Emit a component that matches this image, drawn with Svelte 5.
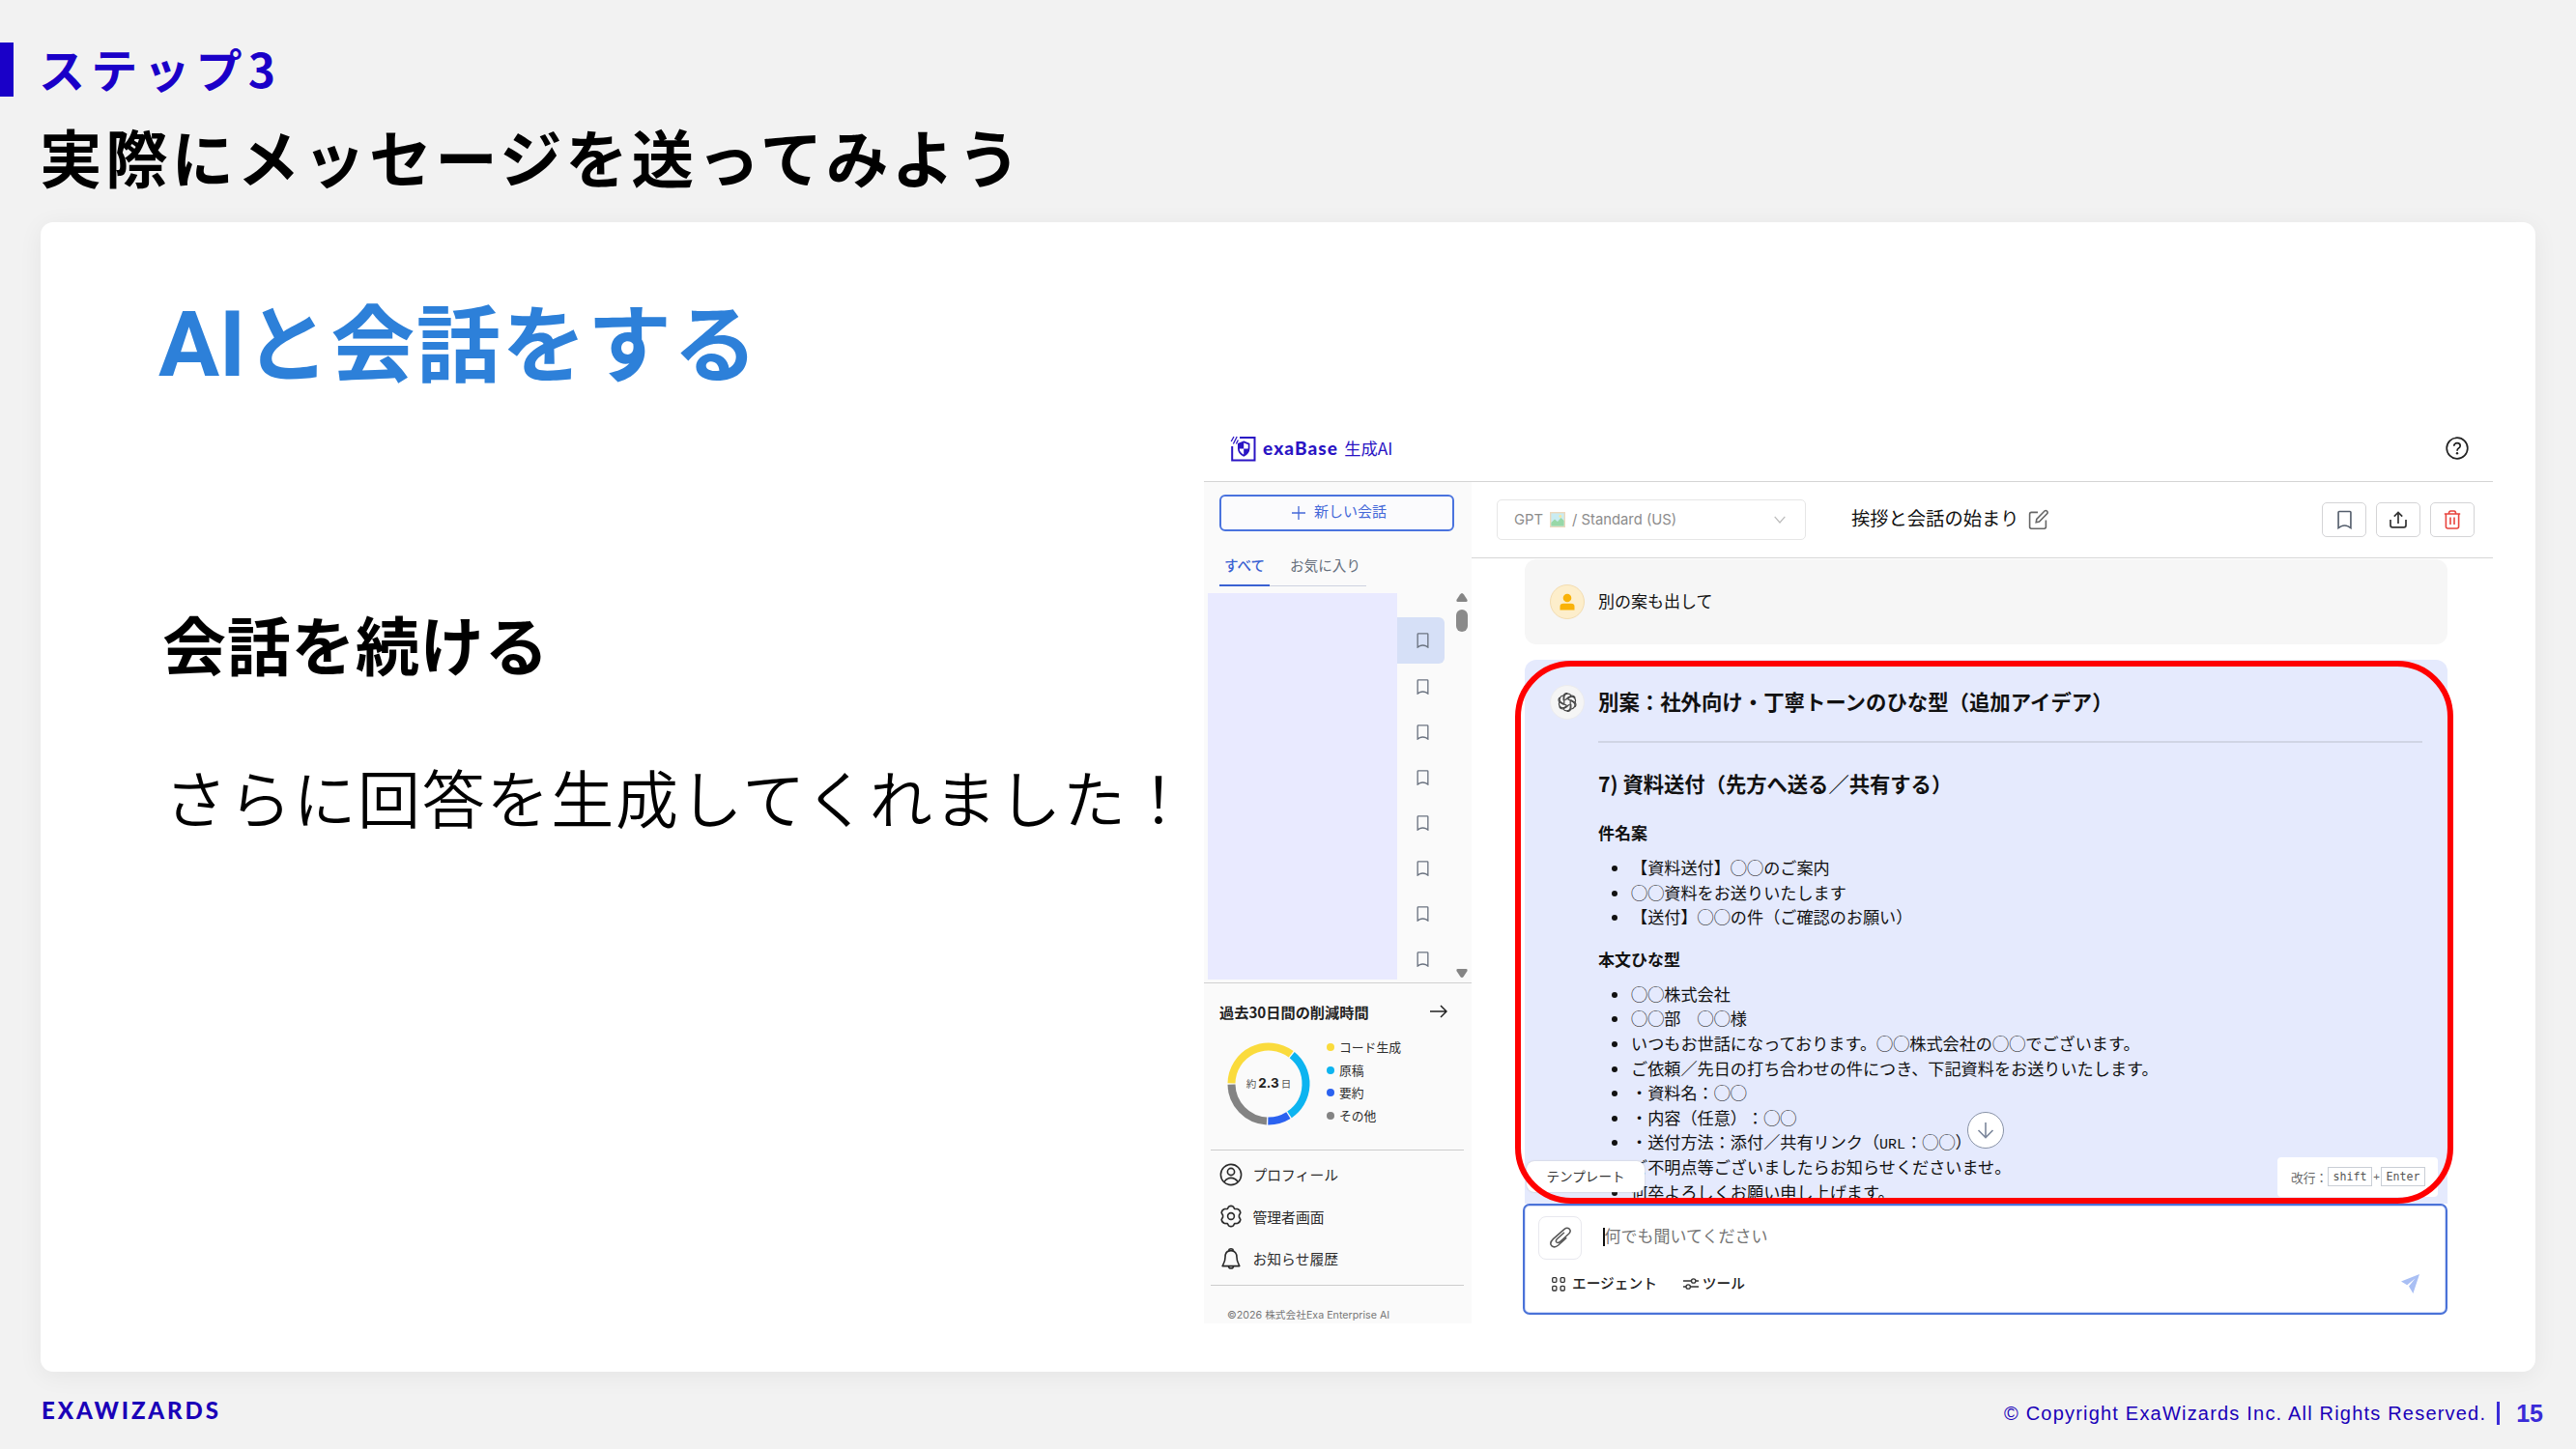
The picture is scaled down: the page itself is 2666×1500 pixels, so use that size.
<script>
  const legend = [
    { label: 'コード生成', color: '#fadb3c' },
    { label: '原稿', color: '#0db4f0' },
    { label: '要約', color: '#2b62f0' },
    { label: 'その他', color: '#838383' }
  ];

  // from / to in degrees, clockwise from the top
  const segments = [
    { from: -89, to: 37, color: '#fadb3c' },
    { from: 39, to: 146, color: '#0db4f0' },
    { from: 148, to: 181, color: '#2b62f0' },
    { from: 183, to: 269, color: '#838383' }
  ];

  const subjects = ['【資料送付】◯◯のご案内', '◯◯資料をお送りいたします', '【送付】◯◯の件（ご確認のお願い）'];
  const bodyTop = [
    '◯◯株式会社',
    '◯◯部　◯◯様',
    'いつもお世話になっております。◯◯株式会社の◯◯でございます。',
    'ご依頼／先日の打ち合わせの件につき、下記資料をお送りいたします。',
    '・資料名：◯◯',
    '・内容（任意）：◯◯'
  ];
  const bodyEnd = ['ご不明点等ございましたらお知らせくださいませ。', '何卒よろしくお願い申し上げます。'];

  let rows = Array(8).fill(0);

  function arc({ from, to }) {
    const p = (deg) => {
      const a = (deg * Math.PI) / 180;
      return `${(43 + 38.5 * Math.sin(a)).toFixed(2)} ${(43 - 38.5 * Math.cos(a)).toFixed(2)}`;
    };
    return `M${p(from)}A38.5 38.5 0 0 1 ${p(to)}`;
  }
</script>

{#snippet bookmark(w, h)}
  <svg width={w} height={h} viewBox="0 0 14 18" fill="none" stroke="currentColor" stroke-width="1.5">
    <path d="M1 1.8Q1 1 1.8 1H12.2Q13 1 13 1.8V17L10.5 15.4Q7 13.8 3.5 15.4L1 17Z" />
  </svg>
{/snippet}

<div class="slide">
  <header>
    <div class="step">ステップ3</div>
    <h1>実際にメッセージを送ってみよう</h1>
  </header>

  <main class="card">
    <section class="copy">
      <h2><span>AI</span>と会話をする</h2>
      <h3>会話を続ける</h3>
      <p>さらに回答を生成してくれました！</p>
    </section>

    <section class="app">
      <div class="topbar">
        <svg class="mark" width="28" height="30" viewBox="0 0 28 30" fill="none" stroke="#2a14c4">
          <path d="M10 4H25.5V27.5H2.2V13" stroke-width="2" />
          <path d="M1.2 8L4 3M3.4 10.5L7.2 3M6.4 10.5L8.4 6.5" stroke-width="1.3" />
          <path d="M14.2 8.4L19.6 10.6V15.4Q19.4 20 14.2 22.8Q9 20 8.8 15.4V10.6Z" stroke-width="1.7" />
          <path d="M14.2 8.4L8.8 10.6V15.4H14.2ZM14.2 15.4V22.8Q19.4 20 19.6 15.4Z" fill="#2a14c4" stroke="none" />
        </svg>
        <b>exaBase</b>
        <span>生成AI</span>
        <svg class="help" width="24" height="24" viewBox="0 0 24 24" fill="none" stroke="#222" stroke-width="1.7">
          <circle cx="12" cy="12" r="10.8" />
          <path d="M8.7 9.8Q8.9 6.7 12 6.7Q15.2 6.7 15.2 9.5Q15.2 11 13.5 12Q12 12.9 12 14.7" />
          <circle cx="12" cy="17.3" r="1.2" fill="#222" stroke="none" />
        </svg>
      </div>

      <aside>
        <button class="new">
          <svg width="14" height="14" viewBox="0 0 14 14" stroke="currentColor" stroke-width="1.3"><path d="M7 0V14M0 7H14" /></svg>
          <span>新しい会話</span>
        </button>
        <nav class="tabs">
          <span class="active">すべて</span>
          <span>お気に入り</span>
        </nav>
        <div class="history">
          <div class="mask"></div>
          <div class="marks">
            {#each rows as _, i}
              <div class="row" class:selected={i === 0}>{@render bookmark(13, 16)}</div>
            {/each}
          </div>
          <div class="scroll">
            <svg width="12" height="9" viewBox="0 0 12 9"><path d="M6 0Q7 0 8 1.5L11.6 7Q12 9 10.5 9H1.5Q0 9 .4 7L4 1.5Q5 0 6 0Z" fill="#858585" /></svg>
            <div class="thumb"></div>
            <svg class="down" width="12" height="9" viewBox="0 0 12 9"><path d="M6 9Q7 9 8 7.5L11.6 2Q12 0 10.5 0H1.5Q0 0 .4 2L4 7.5Q5 9 6 9Z" fill="#858585" /></svg>
          </div>
        </div>

        <div class="usage">
          <div class="usage-head">
            <span>過去30日間の削減時間</span>
            <svg width="18" height="14" viewBox="0 0 18 14" fill="none" stroke="#222" stroke-width="1.5"><path d="M0 7H17M11 1L17 7L11 13" /></svg>
          </div>
          <div class="usage-body">
            <div class="donut">
              <svg width="86" height="86" viewBox="0 0 86 86" fill="none" stroke-width="8">
                {#each segments as s}
                  <path d={arc(s)} stroke={s.color} />
                {/each}
              </svg>
              <div class="value">約<b>2.3</b>日</div>
            </div>
            <ul>
              {#each legend as item}
                <li><i style="background: {item.color}"></i>{item.label}</li>
              {/each}
            </ul>
          </div>
        </div>

        <div class="menu">
          <div>
            <svg width="24" height="24" viewBox="0 0 24 24" fill="none" stroke="#2a2a2a" stroke-width="1.6">
              <circle cx="12" cy="12" r="10.6" /><circle cx="12" cy="9" r="3.6" /><path d="M4.8 19.6Q7.5 15.4 12 15.4T19.2 19.6" />
            </svg>
            プロフィール
          </div>
          <div>
            <svg width="24" height="24" viewBox="0 0 24 24" fill="none" stroke="#2a2a2a" stroke-width="1.6" stroke-linejoin="round">
              <path d="M9.6 2.2Q12 .6 14.4 2.2L15.6 4.4L18.6 4.5Q21.6 5.6 21.8 8.6L20.4 11L20.4 13L21.8 15.4Q21.6 18.4 18.6 19.5L15.6 19.6L14.4 21.8Q12 23.4 9.6 21.8L8.4 19.6L5.4 19.5Q2.4 18.4 2.2 15.4L3.6 13L3.6 11L2.2 8.6Q2.4 5.6 5.4 4.5L8.4 4.4Z" />
              <circle cx="12" cy="12" r="3.4" />
            </svg>
            管理者画面
          </div>
          <div>
            <svg width="24" height="24" viewBox="0 0 24 24" fill="none" stroke="#2a2a2a" stroke-width="1.6" stroke-linejoin="round">
              <path d="M12 3.6C7.8 3.6 6 6.8 6 10.4C6 14.8 4.6 16 3.2 19.6H20.8C19.4 16 18 14.8 18 10.4C18 6.8 16.2 3.6 12 3.6Z" />
              <path d="M10 3.8V2.4Q12 1.2 14 2.4V3.8M9.5 19.8Q9.8 22 12 22T14.5 19.8" />
            </svg>
            お知らせ履歴
          </div>
        </div>
        <small>©2026 株式会社Exa Enterprise AI</small>
      </aside>

      <div class="main">
        <div class="toolbar">
          <div class="select">
            <span>GPT</span>
            <svg width="16" height="16" viewBox="0 0 16 16">
              <rect x=".7" y=".7" width="14.6" height="14.6" fill="#c9ecf2" stroke="#ecd9bd" stroke-width="1.4" />
              <path d="M1.4 11L5 7.5L8 10L11.5 6L14.6 9V14.6H1.4Z" fill="#98d8a8" /><circle cx="10.8" cy="4.5" r="1.4" fill="#f8e7a0" />
            </svg>
            <span>/ Standard (US)</span>
            <svg class="chev" width="12" height="8" viewBox="0 0 12 8" fill="none" stroke="#bbb" stroke-width="1.2"><path d="M.7 .8L6 7L11.3 .8" /></svg>
          </div>
          <span class="title">挨拶と会話の始まり</span>
          <svg width="22" height="22" viewBox="0 0 22 22" fill="none" stroke="#666" stroke-width="1.6">
            <path d="M10 3.4H3.4Q1.6 3.4 1.6 5.2V18.6Q1.6 20.2 3.4 20.2H16.6Q18.4 20.2 18.4 18.6V11.5" />
            <path d="M8.2 13.8L8.8 10.4L17.2 1.8Q18.4 1 19.6 2.2Q20.6 3.4 19.8 4.6L11.5 13Z" />
          </svg>
          <div class="tools">
            <button class="bm">{@render bookmark(15, 20)}</button>
            <button>
              <svg width="18" height="18" viewBox="0 0 18 18" fill="none" stroke="#333" stroke-width="1.7"><path d="M1 9V14.8Q1 16.8 3 16.8H15Q17 16.8 17 14.8V9M9 13V1.6M4.8 5.6L9 1.4L13.2 5.6" /></svg>
            </button>
            <button>
              <svg width="18" height="20" viewBox="0 0 18 20" fill="none" stroke="#e8443e" stroke-width="1.6"><path d="M.8 4H17.2M5.4 4Q5.4 1 7.4 1H10.6Q12.6 1 12.6 4M2.4 4V17Q2.4 19 4.4 19H13.6Q15.6 19 15.6 17V4M7 7.5V15M11 7.5V15" /></svg>
            </button>
          </div>
        </div>

        <div class="chat">
          <div class="msg user">
            <div class="avatar me">
              <svg width="16" height="18" viewBox="0 0 16 18" fill="#f9b208"><circle cx="8" cy="5" r="4.3" /><path d="M.5 17.5V14Q.5 10.8 4 10.8H12Q15.5 10.8 15.5 14V17.5Z" /></svg>
            </div>
            <p>別の案も出して</p>
          </div>

          <div class="msg ai">
            <div class="avatar">
              <svg width="20" height="20" viewBox="-10 -10 20 20" fill="none" stroke="#444" stroke-width="1.2" stroke-linejoin="round">
                {#each [0, 60, 120, 180, 240, 300] as r}
                  <path transform="rotate({r})" d="M-3.2 1.2V-5.2Q-3 -8.8 .6 -8.8Q2.6 -8.8 3.8 -7.4M-.4 -4.2L4.4 -7Q7.4 -7 8.2 -4.4" />
                {/each}
              </svg>
            </div>
            <div class="body">
              <h4>別案：社外向け・丁寧トーンのひな型（追加アイデア）</h4>
              <hr />
              <h5>7) 資料送付（先方へ送る／共有する）</h5>
              <h6>件名案</h6>
              <ul>
                {#each subjects as line}
                  <li>{line}</li>
                {/each}
              </ul>
              <h6 class="second">本文ひな型</h6>
              <ul>
                {#each bodyTop as line}
                  <li>{line}</li>
                {/each}
                <li>・送付方法：添付／共有リンク（<code>URL</code>：◯◯）</li>
                {#each bodyEnd as line}
                  <li>{line}</li>
                {/each}
              </ul>
            </div>
          </div>

          <div class="chip">テンプレート</div>
          <div class="hint">改行：<kbd>shift</kbd><em>+</em><kbd>Enter</kbd></div>
          <div class="to-end">
            <svg width="18" height="18" viewBox="0 0 18 18" fill="none" stroke="#7c879b" stroke-width="1.6"><path d="M9 1V16.5M1.5 9L9 16.5L16.5 9" /></svg>
          </div>
        </div>

        <div class="composer">
          <div class="line">
            <div class="clip">
              <svg width="24" height="22" viewBox="0 0 24 22" fill="none" stroke="#555" stroke-width="1.5" stroke-linecap="round">
                <path d="M15.5 6.3L8.3 12.8Q6.6 14.6 8 16Q9.4 17.2 11.2 15.7L20.6 7.3Q23.4 4.4 21.2 2.2Q18.8 .2 15.8 2.6L4.4 12.6Q.2 16.6 2.8 19.6Q5.8 22.4 9.8 19L17.8 11.8" />
              </svg>
            </div>
            <div class="caret"></div>
            <span>何でも聞いてください</span>
          </div>
          <div class="actions">
            <svg width="14" height="15" viewBox="0 0 14 15" fill="none" stroke="#333" stroke-width="1.3">
              <rect x=".7" y=".7" width="4.2" height="4.6" rx="1" /><rect x="9.1" y=".7" width="4.2" height="4.6" rx="1" />
              <rect x=".7" y="9.4" width="4.2" height="4.6" rx="1" /><rect x="9.1" y="9.4" width="4.2" height="4.6" rx="1" />
            </svg>
            <span>エージェント</span>
            <svg class="tune" width="16" height="14" viewBox="0 0 16 14" fill="none" stroke="#333" stroke-width="1.3">
              <path d="M0 4H8.5M13 4H16M0 10H3M7.5 10H16" /><circle cx="10.7" cy="4" r="2.2" /><circle cx="5.2" cy="10" r="2.2" />
            </svg>
            <span class="tool">ツール</span>
            <svg class="send" width="19" height="20" viewBox="0 0 19 20" fill="#a9bff4"><path d="M19 0L0 7.5L6.2 11.3L14.5 4.6L8 12.6L12.4 20Z" /></svg>
          </div>
        </div>

        <div class="frame"></div>
      </div>
    </section>
  </main>

  <footer>
    <span class="brand">EXAWIZARDS</span>
    <span class="legal">© Copyright ExaWizards Inc. All Rights Reserved.</span>
    <span class="bar"></span>
    <b>15</b>
  </footer>
</div>

<style>
  :global(body) {
    margin: 0;
    background: #f2f2f2;
  }

  .slide {
    width: 2666px;
    height: 1500px;
    display: flex;
    flex-direction: column;
    overflow: hidden;
    background: #f2f2f2;
    color: #111;
    font-family: "Noto Sans CJK JP", sans-serif;
    text-spacing-trim: space-all;
  }

  .slide * {
    box-sizing: border-box;
  }

  h1, h2, h3, h4, h5, h6, p, ul {
    margin: 0;
    padding: 0;
    white-space: nowrap;
  }

  svg {
    display: block;
    flex: none;
  }

  header {
    height: 230px;
    padding-top: 44px;
  }

  .step {
    height: 56px;
    border-left: 14px solid #1a00c8;
    padding-left: 26px;
    color: #1a00c8;
    font-size: 48px;
    font-weight: 700;
    line-height: 52px;
    letter-spacing: 6.2px;
  }

  h1 {
    margin: 17px 0 0 41px;
    font-size: 64.5px;
    font-weight: 700;
    line-height: 88px;
    letter-spacing: 3.7px;
    color: #000;
  }

  .card {
    height: 1190px;
    margin: 0 42px;
    display: flex;
    border-radius: 13px;
    background: #fff;
    box-shadow: 0 4px 26px rgba(0, 0, 0, 0.06);
  }

  .copy {
    width: 1204px;
    padding-left: 122px;
  }

  h2 {
    height: 120px;
    margin-top: 61px;
    line-height: 120px;
    font-size: 87px;
    font-weight: 700;
    letter-spacing: 1.6px;
    color: #2d80d9;
  }

  h2 span {
    font: 700 94px/1 Roboto, sans-serif;
    letter-spacing: -0.5px;
  }

  h3 {
    margin: 204px 0 0 4px;
    line-height: 100px;
    font-size: 66px;
    font-weight: 700;
    letter-spacing: 0.7px;
    color: #000;
  }

  .copy p {
    margin: 59px 0 0 6px;
    line-height: 100px;
    font-size: 65px;
    font-weight: 350;
    letter-spacing: 1.7px;
    color: #000;
  }

  .app {
    width: 1334px;
    height: 940px;
    margin-top: 200px;
    display: grid;
    grid-template: 69px 871px / 277px 1057px;
  }

  .topbar {
    grid-column: 1 / 3;
    display: flex;
    align-items: center;
    padding: 0 25px 1px 27px;
    border-bottom: 1.5px solid #d4d4d4;
    color: #2a14c4;
  }

  .topbar b {
    margin-left: 6px;
    font: 900 19px/24px Lato, sans-serif;
    letter-spacing: 1.1px;
  }

  .topbar span {
    margin-left: 6px;
    font-size: 17.3px;
    line-height: 24px;
    font-weight: 400;
  }

  .help {
    margin-left: auto;
  }

  button {
    display: flex;
    align-items: center;
    justify-content: center;
    padding: 0;
    background: #fff;
    font-family: inherit;
  }

  aside {
    background: #fafafa;
    color: #2c2c2c;
  }

  .new {
    width: 243px;
    height: 38px;
    margin: 13px 0 0 16px;
    padding-left: 5px;
    gap: 9px;
    border: 2px solid #4a73de;
    border-radius: 6px;
    background: #fbfbfd;
    color: #4468d8;
    font-size: 15px;
  }

  .new span {
    padding-bottom: 5px;
  }

  .tabs {
    display: flex;
    width: 152px;
    height: 38px;
    margin: 19px 0 0 16px;
    border-bottom: 1.5px solid #cdd2e0;
    font-size: 14.6px;
    line-height: 32px;
    color: #666f7c;
  }

  .tabs span {
    padding-left: 21px;
    white-space: nowrap;
  }

  .tabs .active {
    width: 52px;
    height: 38px;
    padding-left: 5px;
    border-bottom: 2px solid #3a62d2;
    color: #3a62d2;
    font-weight: 500;
  }

  .history {
    display: flex;
    height: 411px;
    padding: 7px 0 4px 4px;
    border-bottom: 1.5px solid #d0d0d0;
  }

  .mask {
    width: 196px;
    height: 400px;
    background: #e9eaff;
  }

  .marks {
    width: 49px;
    padding-top: 25px;
    color: #6b7380;
  }

  .row {
    height: 47px;
    display: flex;
    align-items: center;
    padding-left: 20px;
  }

  .row.selected {
    height: 48px;
    border-radius: 0 6px 6px 0;
    background: #d6e0f7;
  }

  .scroll {
    display: flex;
    flex-direction: column;
    margin-left: 11.5px;
  }

  .thumb {
    width: 12px;
    height: 23px;
    margin-top: 8px;
    border-radius: 6px;
    background: #8a8a8a;
  }

  .down {
    margin-top: auto;
    margin-bottom: 1px;
  }

  .usage {
    height: 173px;
    margin: 0 8px 0 7px;
    padding: 16px 17px 0 9px;
    border-bottom: 1.5px solid #ccc;
  }

  .usage-head {
    display: flex;
    align-items: center;
    justify-content: space-between;
    height: 26px;
    font-size: 15.2px;
    font-weight: 700;
    color: #222;
  }

  .usage-body {
    display: flex;
    align-items: flex-start;
    padding: 17px 0 0 8px;
  }

  .donut {
    position: relative;
    width: 86px;
    height: 86px;
    margin-top: 2px;
  }

  .value {
    position: absolute;
    inset: 0 0 2px 0;
    display: flex;
    align-items: center;
    justify-content: center;
    gap: 2px;
    font-size: 10.5px;
    color: #555;
  }

  .value b {
    font: 700 13.5px Inter, sans-serif;
    color: #222;
  }

  .usage ul {
    list-style: none;
    margin: -5px 0 0 17px;
    font-size: 12.8px;
    line-height: 23.7px;
  }

  .usage li {
    display: flex;
    align-items: center;
    gap: 5px;
  }

  .usage i {
    width: 8px;
    height: 8px;
    border-radius: 50%;
  }

  .menu {
    height: 140px;
    margin: 0 8px 0 7px;
    padding: 3px 0 0 9px;
    border-bottom: 1.5px solid #ccc;
    font-size: 14.8px;
  }

  .menu div {
    height: 43.5px;
    display: flex;
    align-items: center;
    gap: 10.5px;
  }

  small {
    display: block;
    margin: 23px 0 0 24px;
    font: 10.7px/16px Inter, "Noto Sans CJK JP", sans-serif;
    color: #777;
    white-space: nowrap;
  }

  .main {
    position: relative;
  }

  .toolbar {
    height: 78.5px;
    display: flex;
    align-items: center;
    padding: 0 19px 0 26px;
    border-bottom: 1.5px solid #d6d6d6;
  }

  .select {
    width: 320px;
    height: 42px;
    display: flex;
    align-items: center;
    gap: 7px;
    padding: 0 20px 0 17px;
    border: 1.5px solid #e6e6e6;
    border-radius: 5px;
    font: 14.8px Inter, sans-serif;
    color: #8c8c8c;
  }

  .chev {
    margin-left: auto;
  }

  .title {
    margin: 0 9px 3px 47px;
    font-size: 19.3px;
    line-height: 26px;
    white-space: nowrap;
  }

  .tools {
    display: flex;
    gap: 10px;
    margin-left: auto;
  }

  .tools button {
    width: 46px;
    height: 36px;
    border: 1.5px solid #d4d4d6;
    border-radius: 5px;
  }

  .tools .bm {
    color: #535d6b;
  }

  .chat {
    position: relative;
    height: 668.5px;
    overflow: hidden;
  }

  .msg {
    display: flex;
    gap: 14px;
    width: 955px;
    margin-left: 55px;
    padding: 0 26px;
    border-radius: 12px;
  }

  .user {
    height: 88px;
    margin-top: 1px;
    align-items: center;
    background: #f6f6f6;
    font-size: 17px;
  }

  .user p {
    padding-bottom: 3px;
  }

  .ai {
    height: 600px;
    margin-top: 16px;
    padding-top: 26px;
    background: #e5eafd;
  }

  .avatar {
    width: 36px;
    height: 36px;
    flex: none;
    display: flex;
    align-items: center;
    justify-content: center;
    border-radius: 50%;
    border: 1px solid #ebebee;
    background: #f5f5f5;
  }

  .avatar.me {
    border-color: #f3dcb0;
    background: #fdeecb;
  }

  .body {
    flex: 1;
  }

  h4 {
    font-size: 21.4px;
    font-weight: 700;
    line-height: 34px;
  }

  hr {
    height: 1.5px;
    margin: 24.5px 0 0;
    border: 0;
    background: #d0d5e4;
  }

  h5 {
    margin-top: 26.5px;
    font-size: 21.3px;
    font-weight: 700;
    line-height: 32px;
  }

  h6 {
    margin: 22px 0 10px;
    font-size: 17px;
    font-weight: 700;
    line-height: 26px;
  }

  h6.second {
    margin-top: 18px;
    margin-bottom: 10px;
  }

  .body ul {
    list-style: none;
    font-size: 17.15px;
    line-height: 25.6px;
  }

  .body li {
    height: 25.6px;
  }

  .body li::before {
    content: "";
    display: inline-block;
    width: 6px;
    height: 6px;
    margin: 0 14px 3px 14px;
    border-radius: 50%;
    background: #111;
  }

  code {
    font: 15px/1 "Liberation Mono", monospace;
  }

  .chip {
    position: absolute;
    left: 57px;
    top: 624px;
    width: 122px;
    height: 32px;
    border-radius: 8px;
    background: #fff;
    box-shadow: 0 0 2px #bbb;
    font-size: 13.6px;
    line-height: 31px;
    text-align: center;
    color: #333;
  }

  .hint {
    position: absolute;
    left: 834px;
    top: 620px;
    width: 166px;
    height: 41px;
    display: flex;
    align-items: center;
    padding-left: 14px;
    border-radius: 4px;
    background: #fff;
    font-size: 12.7px;
    color: #666;
    white-space: nowrap;
  }

  kbd {
    width: 46px;
    height: 20px;
    border: 1.3px solid #c9ced6;
    font: 11.6px/18px "DejaVu Sans Mono", monospace;
    text-align: center;
    color: #555;
  }

  .hint em {
    width: 9px;
    font: 11px "DejaVu Sans Mono", monospace;
    text-align: center;
  }

  .to-end {
    position: absolute;
    left: 513px;
    top: 573px;
    width: 38px;
    height: 38px;
    display: flex;
    align-items: center;
    justify-content: center;
    border: 1.5px solid #8892a6;
    border-radius: 50%;
    background: #fff;
  }

  .composer {
    width: 957px;
    height: 115px;
    margin-left: 53px;
    padding: 10.5px 27px 0 14px;
    border: 2px solid #4a72d8;
    border-radius: 7px;
    background: #fff;
    box-shadow: inset 0 0 0 1px #d3dcf6;
  }

  .line {
    display: flex;
    align-items: center;
    font-size: 17px;
    color: #757575;
  }

  .line span {
    padding-bottom: 5px;
  }

  .clip {
    width: 45px;
    height: 45px;
    display: flex;
    align-items: center;
    justify-content: center;
    border: 1.3px solid #e8e8ee;
    border-radius: 8px;
  }

  .caret {
    width: 1.5px;
    height: 19px;
    margin: 0 0 2px 22px;
    background: #111;
  }

  .actions {
    display: flex;
    align-items: center;
    height: 24px;
    margin-top: 13.5px;
    padding-left: 14px;
    font-size: 14.7px;
    font-weight: 500;
    color: #222;
  }

  .actions span {
    margin-left: 7px;
    padding-bottom: 3px;
  }

  .actions .tool {
    margin-left: 4px;
  }

  .tune {
    margin-left: 27px;
  }

  .send {
    margin-left: auto;
  }

  .frame {
    position: absolute;
    left: 45px;
    top: 185px;
    width: 971px;
    height: 562px;
    border: 6px solid #f00;
    border-radius: 58px;
  }

  footer {
    display: flex;
    align-items: center;
    height: 80px;
    padding: 6px 34px 0 43px;
    color: #1a00b8;
  }

  .brand {
    margin-top: -7px;
    font: 900 24px/30px Lato, sans-serif;
    letter-spacing: 2.9px;
  }

  .legal {
    margin-left: auto;
    font: 20px/30px "Liberation Sans", sans-serif;
    letter-spacing: 1.2px;
  }

  .bar {
    width: 3px;
    height: 24px;
    margin: 0 17px 0 11px;
    background: #3a2bd8;
  }

  footer b {
    font: 700 25px/30px "Liberation Sans", sans-serif;
    color: #3a2bd8;
  }
</style>
